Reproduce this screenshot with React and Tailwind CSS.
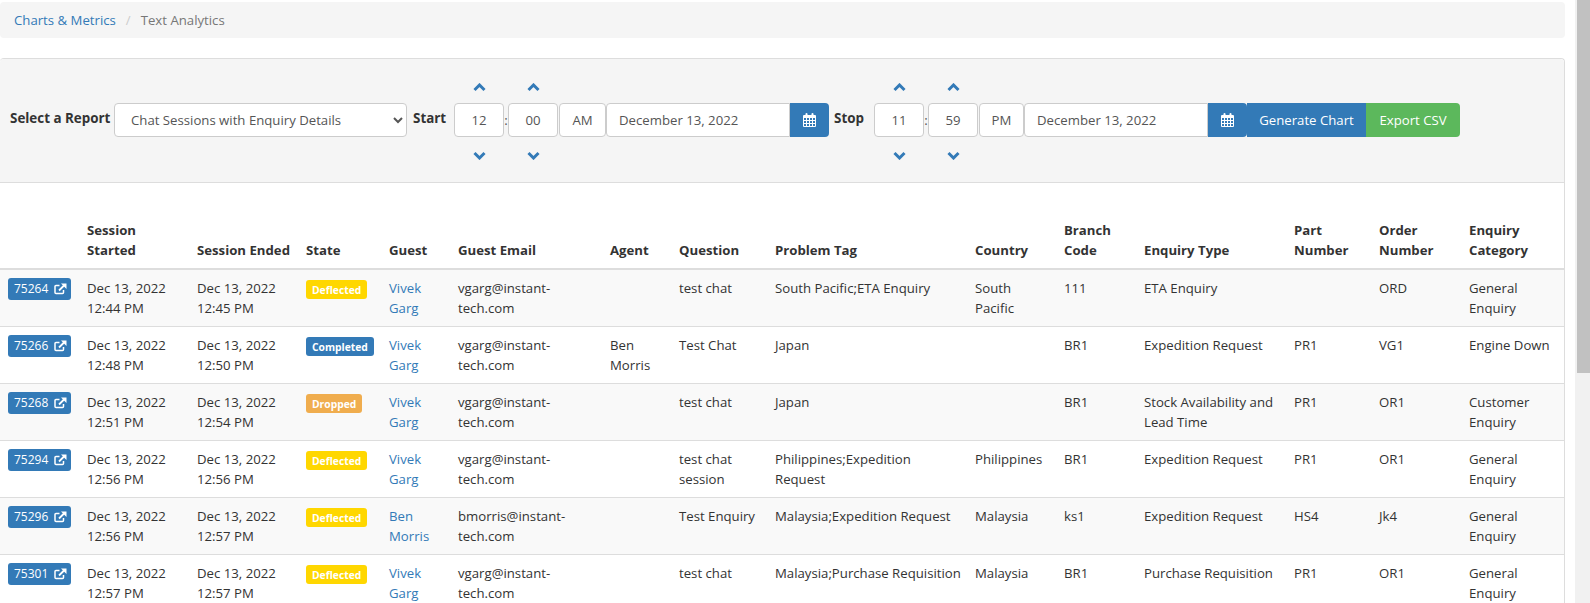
import React from 'react';

const rows = [
  { id: '75264', start: ['Dec 13, 2022', '12:44 PM'], end: ['Dec 13, 2022', '12:45 PM'], state: 'Deflected', guest: ['Vivek', 'Garg'], email: ['vgarg@instant-', 'tech.com'], agent: [], question: ['test chat'], tag: ['South Pacific;ETA Enquiry'], country: ['South', 'Pacific'], branch: '111', type: ['ETA Enquiry'], part: '', order: 'ORD', category: ['General', 'Enquiry'] },
  { id: '75266', start: ['Dec 13, 2022', '12:48 PM'], end: ['Dec 13, 2022', '12:50 PM'], state: 'Completed', guest: ['Vivek', 'Garg'], email: ['vgarg@instant-', 'tech.com'], agent: ['Ben', 'Morris'], question: ['Test Chat'], tag: ['Japan'], country: [], branch: 'BR1', type: ['Expedition Request'], part: 'PR1', order: 'VG1', category: ['Engine Down'] },
  { id: '75268', start: ['Dec 13, 2022', '12:51 PM'], end: ['Dec 13, 2022', '12:54 PM'], state: 'Dropped', guest: ['Vivek', 'Garg'], email: ['vgarg@instant-', 'tech.com'], agent: [], question: ['test chat'], tag: ['Japan'], country: [], branch: 'BR1', type: ['Stock Availability and', 'Lead Time'], part: 'PR1', order: 'OR1', category: ['Customer', 'Enquiry'] },
  { id: '75294', start: ['Dec 13, 2022', '12:56 PM'], end: ['Dec 13, 2022', '12:56 PM'], state: 'Deflected', guest: ['Vivek', 'Garg'], email: ['vgarg@instant-', 'tech.com'], agent: [], question: ['test chat', 'session'], tag: ['Philippines;Expedition', 'Request'], country: ['Philippines'], branch: 'BR1', type: ['Expedition Request'], part: 'PR1', order: 'OR1', category: ['General', 'Enquiry'] },
  { id: '75296', start: ['Dec 13, 2022', '12:56 PM'], end: ['Dec 13, 2022', '12:57 PM'], state: 'Deflected', guest: ['Ben', 'Morris'], email: ['bmorris@instant-', 'tech.com'], agent: [], question: ['Test Enquiry'], tag: ['Malaysia;Expedition Request'], country: ['Malaysia'], branch: 'ks1', type: ['Expedition Request'], part: 'HS4', order: 'Jk4', category: ['General', 'Enquiry'] },
  { id: '75301', start: ['Dec 13, 2022', '12:57 PM'], end: ['Dec 13, 2022', '12:57 PM'], state: 'Deflected', guest: ['Vivek', 'Garg'], email: ['vgarg@instant-', 'tech.com'], agent: [], question: ['test chat'], tag: ['Malaysia;Purchase Requisition'], country: ['Malaysia'], branch: 'BR1', type: ['Purchase Requisition'], part: 'PR1', order: 'OR1', category: ['General', 'Enquiry'] },
];

const stateColors = {
  Deflected: 'bg-[#ffd700]',
  Completed: 'bg-[#337ab7]',
  Dropped: 'bg-[#f0ad4e]',
};

const Lines = ({ items }) => items.map((t) => <div key={t} className="whitespace-nowrap">{t}</div>);

// fa-calendar, drawn by hand since the packages only ship the newer shape
const CalendarIcon = () => (
  <svg width="13" height="14" viewBox="0 0 13 14" fill="currentColor">
    <path fillRule="evenodd" d="M0 3a1 1 0 0 1 1-1h1.500V1a1 1 0 0 1 2 0v1h4V1a1 1 0 0 1 2 0v1H12a1 1 0 0 1 1 1v10a1 1 0 0 1-1 1H1a1 1 0 0 1-1-1V3zm1 2v2h2V5H1zm3 0v2h2V5H4zm3 0v2h2V5H7zm3 0v2h2V5h-2zM1 8v2h2V8H1zm3 0v2h2V8H4zm3 0v2h2V8H7zm3 0v2h2V8h-2zM1 11v2h2v-2H1zm3 0v2h2v-2H4zm3 0v2h2v-2H7zm3 0v2h2v-2h-2z" />
  </svg>
);

const ExternalIcon = () => (
  <svg width="13" height="12" viewBox="0 0 13 12" fill="none" stroke="currentColor" strokeWidth="1.500">
    <path d="M9.500 7v2.500a1 1 0 0 1-1 1H2a1 1 0 0 1-1-1V3.500a1 1 0 0 1 1-1h3.500" />
    <path d="M5 7.500 10.500 2" strokeWidth="1.800" />
    <path d="M7 .5h5.500V6z" fill="currentColor" stroke="none" />
  </svg>
);

const Chevron = ({ down }) => (
  <svg width="13" height="9" viewBox="0 0 13 9" fill="none" stroke="#337ab7" strokeWidth="3">
    <path d={down ? 'M1.500 2 6.500 7 11.500 2' : 'M1.500 7 6.500 2 11.500 7'} />
  </svg>
);

const TimeField = ({ value }) => (
  <div className="flex flex-col items-center pt-[3px]">
    <div className="mb-[11px]"><Chevron /></div>
    <div className="w-[50px] h-[34px] flex items-center justify-center bg-white border border-[#ccc] rounded text-[#555]">{value}</div>
    <div className="mt-[14px]"><Chevron down /></div>
  </div>
);

const Meridian = ({ value, width }) => (
  <div className={`${width} h-[34px] flex items-center justify-center bg-white border border-[#ccc] rounded text-[#555]`}>{value}</div>
);

const DateField = ({ value }) => (
  <div className="flex w-[223px] h-[34px]">
    <div className="flex-1 flex items-center pl-3 bg-white border border-[#ccc] rounded-l text-[#555]">{value}</div>
    <button className="w-[39px] flex items-center justify-center bg-[#337ab7] text-white rounded-r">
      <CalendarIcon />
    </button>
  </div>
);

const Th = ({ width, children }) => (
  <th className={`${width} px-2 pt-2 pb-2 text-left align-bottom font-bold border-b-2 border-[#ddd]`}>{children}</th>
);

const Td = ({ children }) => <td className="p-2 align-top border-t border-[#ddd]">{children}</td>;

export default function App() {
  return (
    <div className="h-screen overflow-hidden flex bg-white text-[#333] text-[13.200px] leading-5 font-['Open_Sans','Noto_Sans',sans-serif]">
      <main className="w-[1565px] shrink-0 pt-[2px]">
        <nav className="h-9 flex items-center px-[14px] bg-[#f5f5f5] rounded">
          <a className="text-[#337ab7]">Charts &amp; Metrics</a>
          <span className="mx-[10px] text-[#ccc]">/</span>
          <span className="text-[#777]">Text Analytics</span>
        </nav>

        <section className="mt-[20px] border-t border-r border-[#ddd] rounded-t">
          <div className="h-[124px] pb-px flex items-center pl-[10px] bg-[#f5f5f5] border-b border-[#ddd] rounded-t">
            <label className="font-bold w-[104px] text-[13.400px] -mt-[4px]">Select a Report</label>
            <select className="w-[293px] h-[34px] pl-3 bg-white border border-[#ccc] rounded text-[#555]" defaultValue="chat">
              <option value="chat">Chat Sessions with Enquiry Details</option>
            </select>
            <label className="font-bold ml-[6px] w-[41px] text-[13.400px] -mt-[4px]">Start</label>
            <TimeField value="12" />
            <span className="w-[4px] text-center text-[#555]">:</span>
            <TimeField value="00" />
            <div className="w-px" />
            <Meridian value="AM" width="w-[47px]" />
            <DateField value="December 13, 2022" />
            <label className="font-bold ml-[5px] w-[40px] text-[13.400px] -mt-[4px]">Stop</label>
            <TimeField value="11" />
            <span className="w-[4px] text-center text-[#555]">:</span>
            <TimeField value="59" />
            <div className="w-px" />
            <Meridian value="PM" width="w-[45px]" />
            <DateField value="December 13, 2022" />
            <button className="w-[119px] h-[34px] bg-[#337ab7] text-white">Generate Chart</button>
            <button className="w-[94px] h-[34px] bg-[#5cb85c] text-white rounded-r">Export CSV</button>
          </div>

          <div className="pt-[29px]">
            <table className="w-full table-fixed border-collapse">
              <thead>
                <tr>
                  <Th width="w-[79px]" />
                  <Th width="w-[110px]">Session<br />Started</Th>
                  <Th width="w-[109px]"><span className="whitespace-nowrap">Session Ended</span></Th>
                  <Th width="w-[83px]">State</Th>
                  <Th width="w-[69px]">Guest</Th>
                  <Th width="w-[152px]">Guest Email</Th>
                  <Th width="w-[69px]">Agent</Th>
                  <Th width="w-[96px]">Question</Th>
                  <Th width="w-[200px]">Problem Tag</Th>
                  <Th width="w-[89px]">Country</Th>
                  <Th width="w-[80px]">Branch<br />Code</Th>
                  <Th width="w-[150px]">Enquiry Type</Th>
                  <Th width="w-[85px]">Part<br />Number</Th>
                  <Th width="w-[90px]">Order<br />Number</Th>
                  <Th width="w-[103px]">Enquiry<br />Category</Th>
                </tr>
              </thead>
              <tbody>
                {rows.map((r, i) => (
                  <tr key={r.id} className={i % 2 === 0 ? 'bg-[#f9f9f9]' : 'bg-white'}>
                    <Td>
                      <a className="inline-flex items-center gap-[6px] w-[63px] h-[22px] pl-[6px] bg-[#337ab7] text-white text-[12px] rounded-[3px]">
                        {r.id}
                        <ExternalIcon />
                      </a>
                    </Td>
                    <Td><Lines items={r.start} /></Td>
                    <Td><Lines items={r.end} /></Td>
                    <Td>
                      <span className={`${stateColors[r.state]} inline-flex items-center h-[19px] px-[6px] mt-[2px] text-white text-[10.300px] font-bold rounded-[3px]`}>{r.state}</span>
                    </Td>
                    <Td><div className="text-[#337ab7]"><Lines items={r.guest} /></div></Td>
                    <Td><Lines items={r.email} /></Td>
                    <Td><Lines items={r.agent} /></Td>
                    <Td><Lines items={r.question} /></Td>
                    <Td><Lines items={r.tag} /></Td>
                    <Td><Lines items={r.country} /></Td>
                    <Td>{r.branch}</Td>
                    <Td><Lines items={r.type} /></Td>
                    <Td>{r.part}</Td>
                    <Td>{r.order}</Td>
                    <Td><Lines items={r.category} /></Td>
                  </tr>
                ))}
              </tbody>
            </table>
          </div>
        </section>
      </main>

      {/* window scrollbar from the screenshot */}
      <div className="ml-[10px] flex-1 bg-[#f1f1f1] pl-[2px]">
        <div className="h-[373px] bg-[#c1c1c1]" />
      </div>
    </div>
  );
}
